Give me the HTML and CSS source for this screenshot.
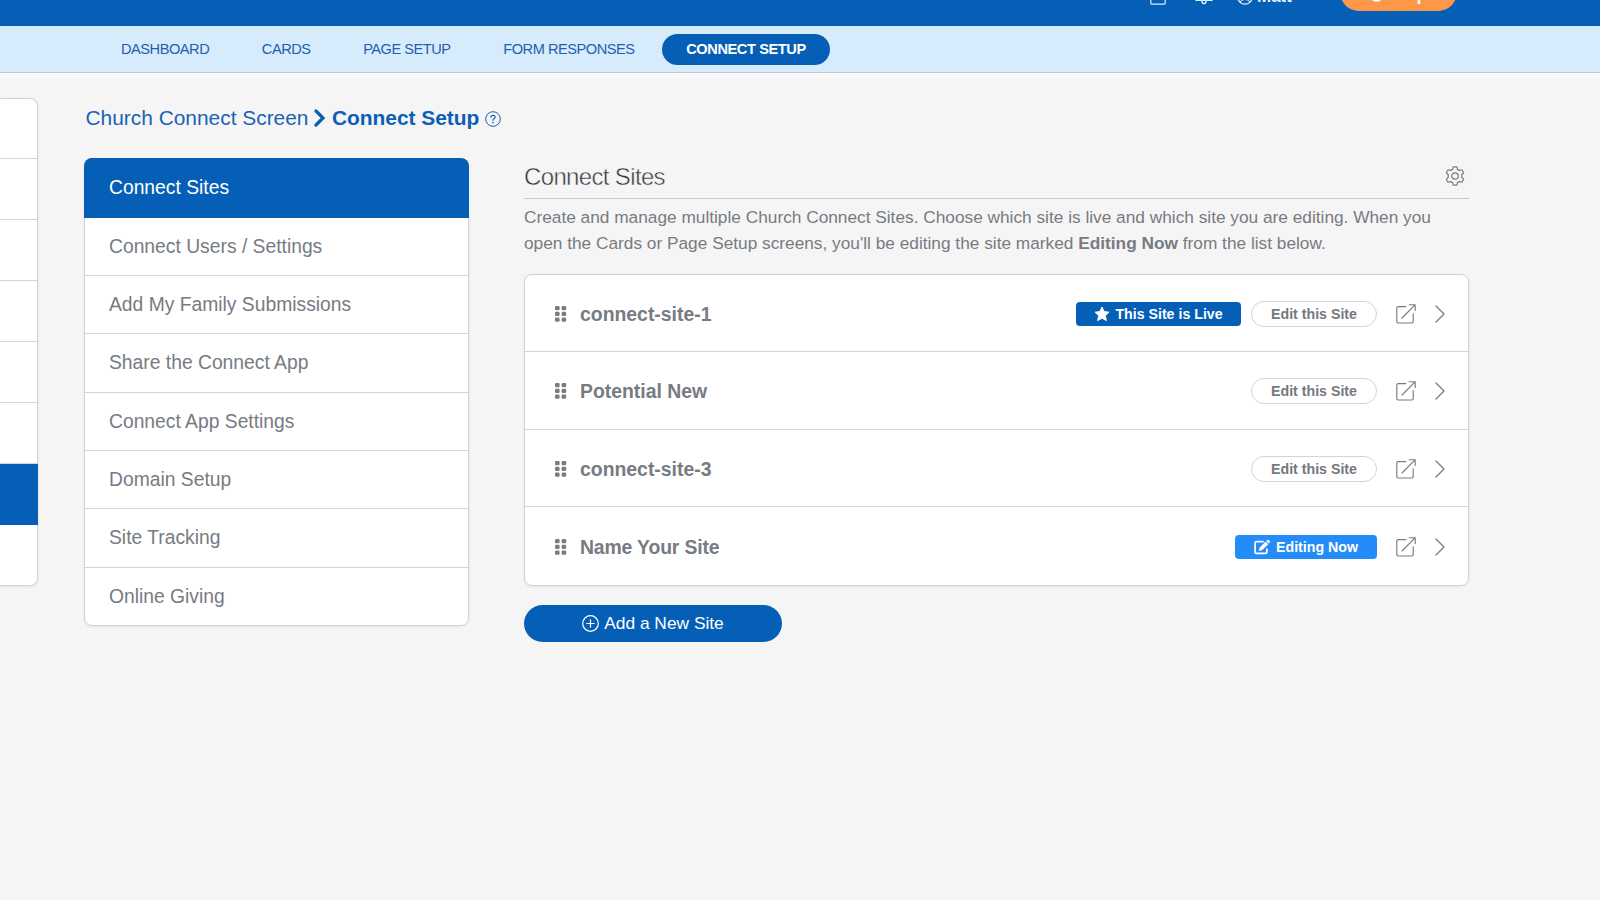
FILE: index.html
```html
<!DOCTYPE html>
<html lang="en">
<head>
<meta charset="utf-8">
<title>Connect Setup</title>
<link rel="stylesheet" href="styles.css">
</head>
<body>
<svg class="defs" width="0" height="0">
  <symbol id="grip" viewBox="0 0 12 16"><g fill="currentColor"><rect x="0" y="0" width="4.6" height="4.2" rx="1.3"/><rect x="6.6" y="0" width="4.6" height="4.2" rx="1.3"/><rect x="0" y="5.8" width="4.6" height="4.2" rx="1.3"/><rect x="6.6" y="5.8" width="4.6" height="4.2" rx="1.3"/><rect x="0" y="11.6" width="4.6" height="4.2" rx="1.3"/><rect x="6.6" y="11.6" width="4.6" height="4.2" rx="1.3"/></g></symbol>
  <symbol id="open" viewBox="0 0 20 20"><path fill="none" stroke="currentColor" stroke-width="1.15" stroke-linecap="round" stroke-linejoin="round" d="M9.8 2.6H2.2Q.8 2.6.8 4V17.6Q.8 19 2.2 19H15.8Q17.2 19 17.2 17.6V9.8M13.2.7H19.2V6.6M19 .9L6 14"/></symbol>
  <symbol id="next" viewBox="0 0 10 18"><path fill="none" stroke="currentColor" stroke-width="1.3" stroke-linecap="round" stroke-linejoin="round" d="M1 1L9 9L1 17"/></symbol>
</svg>

<header class="topbar">
  <div class="top-inner">
    <svg class="top-page" width="16" height="18" viewBox="0 0 16 18"><rect x=".8" y=".8" width="14.4" height="16.4" rx="1" fill="none" stroke="currentColor" stroke-width="1.2"/></svg>
    <svg class="top-bell" width="18" height="20" viewBox="0 0 18 20"><path d="M9 1C5 1 3.5 4 3.5 8S2 13 1 14.5V15.4H17V14.5C16 13 14.5 12 14.5 8S13 1 9 1ZM6.8 15.6Q7 18.6 9 18.6T11.2 15.6" fill="none" stroke="currentColor" stroke-width="1.4"/></svg>
    <span class="user"><svg width="16" height="16" viewBox="0 0 16 16"><circle cx="8" cy="8" r="7.2" fill="none" stroke="currentColor" stroke-width="1.3"/><path d="M3 12.8Q8 8 13 12.8" fill="none" stroke="currentColor"/></svg>Matt</span>
    <span class="help"><svg width="15" height="15" viewBox="0 0 15 15"><circle cx="7.5" cy="7.5" r="6" fill="none" stroke="currentColor" stroke-width="2.6"/></svg>Help</span>
  </div>
</header>

<nav class="subnav">
  <a>DASHBOARD</a><a>CARDS</a><a>PAGE SETUP</a><a>FORM RESPONSES</a><a class="current">CONNECT SETUP</a>
</nav>

<div class="page">
  <aside class="rail">
    <i></i><i></i><i></i><i></i><i></i><i></i><i class="on"></i><i></i>
  </aside>

  <main class="content">
    <h1 class="crumbs">
      <span>Church Connect Screen</span>
      <svg class="crumb-sep" width="12" height="18" viewBox="0 0 12 18"><path d="M2 2L9 9L2 16" fill="none" stroke="currentColor" stroke-width="3.2" stroke-linecap="round"/></svg>
      <b>Connect Setup</b>
      <svg class="crumb-help" width="16" height="16" viewBox="0 0 16 16"><circle cx="8" cy="8" r="7.3" fill="none" stroke="currentColor"/><path d="M5.8 6.2Q5.9 4.3 8 4.3T10.2 6.1Q10.2 7.1 9 7.7T8 9.3" fill="none" stroke="currentColor" stroke-width="1.2" stroke-linecap="round"/><circle cx="8" cy="11.5" r=".85" fill="currentColor"/></svg>
    </h1>

    <div class="columns">
      <ul class="menu">
        <li class="active">Connect Sites</li>
        <li>Connect Users / Settings</li>
        <li>Add My Family Submissions</li>
        <li>Share the Connect App</li>
        <li>Connect App Settings</li>
        <li>Domain Setup</li>
        <li>Site Tracking</li>
        <li>Online Giving</li>
      </ul>

      <section class="panel">
        <div class="panel-head">
          <h2>Connect Sites</h2>
          <svg class="gear" width="20" height="20" viewBox="0 0 20 20"><path d="M7.6 3.4L8 1.3Q8.1.8 8.6.8H11.4Q11.9.8 12 1.3L12.4 3.4Q13.5 3.8 14.3 4.5L16.3 3.8Q16.8 3.6 17.1 4.1L18.5 6.5Q18.7 7 18.3 7.3L16.7 8.7Q16.9 10 16.7 11.3L18.3 12.7Q18.7 13 18.5 13.5L17.1 15.9Q16.8 16.4 16.3 16.2L14.3 15.5Q13.5 16.2 12.4 16.6L12 18.7Q11.9 19.2 11.4 19.2H8.6Q8.1 19.2 8 18.7L7.6 16.6Q6.5 16.2 5.7 15.5L3.7 16.2Q3.2 16.4 2.9 15.9L1.5 13.5Q1.3 13 1.7 12.7L3.3 11.3Q3.1 10 3.3 8.7L1.7 7.3Q1.3 7 1.5 6.5L2.9 4.1Q3.2 3.6 3.7 3.8L5.7 4.5Q6.5 3.8 7.6 3.4Z" fill="none" stroke="currentColor" stroke-width="1.2"/><circle cx="10" cy="10" r="3.2" fill="none" stroke="currentColor" stroke-width="1.2"/></svg>
        </div>
        <p class="intro">Create and manage multiple Church Connect Sites. Choose which site is live and which site you are editing. When you<br>open the Cards or Page Setup screens, you'll be editing the site marked <b>Editing Now</b> from the list below.</p>

        <ul class="sites">
          <li>
            <svg class="grip"><use href="#grip"/></svg><span class="name">connect-site-1</span>
            <span class="badge live"><svg width="16" height="16" viewBox="0 0 16 16"><path d="M8 1L10.1 5.6L15 6.2L11.4 9.6L12.3 14.6L8 12.2L3.7 14.6L4.6 9.6L1 6.2L5.9 5.6Z" fill="currentColor" stroke="currentColor" stroke-linejoin="round"/></svg>This Site is Live</span>
            <button class="edit">Edit this Site</button>
            <svg class="open"><use href="#open"/></svg><svg class="next"><use href="#next"/></svg>
          </li>
          <li>
            <svg class="grip"><use href="#grip"/></svg><span class="name">Potential New</span>
            <button class="edit">Edit this Site</button>
            <svg class="open"><use href="#open"/></svg><svg class="next"><use href="#next"/></svg>
          </li>
          <li>
            <svg class="grip"><use href="#grip"/></svg><span class="name">connect-site-3</span>
            <button class="edit">Edit this Site</button>
            <svg class="open"><use href="#open"/></svg><svg class="next"><use href="#next"/></svg>
          </li>
          <li>
            <svg class="grip"><use href="#grip"/></svg><span class="name tight">Name Your Site</span>
            <span class="badge editing"><svg width="17" height="16" viewBox="0 0 17 16"><path d="M9 2.6H2.5Q1.1 2.6 1.1 4V13Q1.1 14.4 2.5 14.4H11.5Q12.9 14.4 12.9 13V10" fill="none" stroke="currentColor" stroke-width="1.7" stroke-linecap="round"/><path d="M11.6 2.6L14.2 5.2L8 11.3L4.9 12L5.5 8.7ZM12.3 1.9L13.2 1Q14 .4 14.7 1L15.8 2.1Q16.4 2.8 15.8 3.6L14.9 4.5Z" fill="currentColor"/></svg>Editing Now</span>
            <svg class="open"><use href="#open"/></svg><svg class="next"><use href="#next"/></svg>
          </li>
        </ul>

        <button class="add"><svg width="17" height="17" viewBox="0 0 17 17"><path d="M8.5 4.8V12.2M4.8 8.5H12.2" stroke="currentColor" stroke-width="1.2" stroke-linecap="round"/><circle cx="8.5" cy="8.5" r="7.8" fill="none" stroke="currentColor" stroke-width="1.2"/></svg>Add a New Site</button>
      </section>
    </div>
  </main>
</div>
</body>
</html>
```

FILE: styles.css
```css
* { box-sizing: border-box; }
body {
  margin: 0;
  height: 900px;
  overflow: hidden;
  background: #f5f5f5;
  color: #777b82;
  font-family: "Liberation Sans", Arial, sans-serif;
}
h1, h2, p, ul { margin: 0; padding: 0; font-weight: 400; }
ul { list-style: none; }
button { font-family: inherit; padding: 0; }
svg { flex: none; display: block; }
.defs { position: absolute; }

/* The header is scrolled so that only its lower edge remains in view. */
.topbar { height: 25.5px; overflow: hidden; background: #065fb7; color: #d9ecff; }
.top-inner { display: flex; align-items: flex-end; height: 40px; margin-top: -29px; padding-left: 1150px; }
.top-page { margin-bottom: 6.5px; }
.top-bell { margin: 0 0 6px 28.5px; }
.user { display: flex; align-items: center; gap: 4px; margin: 0 0 5px 24.5px; color: #e6f2ff; font-size: 17px; font-weight: 700; line-height: 18px; }
.user svg { margin-bottom: 1px; }
.help {
  display: flex; align-items: center; justify-content: center; gap: 4px;
  width: 117px; height: 38px; margin: 0 0 0 48px; padding-top: 5px; border-radius: 19px;
  background: #ff9748; color: #fff; font-size: 18px; font-weight: 700;
}

.subnav {
  display: flex; align-items: center; height: 47.5px; padding: 1px 0 0 121px;
  background: #d6ebfc; border-bottom: 1.5px solid #b7cbdf; color: #1f5fac;
  font-size: 14.6px; letter-spacing: -.47px; white-space: nowrap;
  box-shadow: 0 5px 0 #f8f8f8;
}
.subnav a { margin-right: 52.6px; }
.subnav a:nth-child(4) { margin-right: 27.5px; }
.subnav .current {
  width: 168px; margin: 0; border-radius: 16px; background: #065fb7; color: #fff;
  font-weight: 700; line-height: 31px; text-align: center; letter-spacing: -.4px;
}

.page { display: flex; align-items: flex-start; }
.rail {
  width: 38px; margin-top: 25px; border: solid #d4d4d4; border-width: 1px 1px 1px 0;
  border-radius: 0 8px 8px 0; background: #fff; box-shadow: 0 1px 3px #0001;
}
.rail i { display: block; height: 60.9px; border-bottom: 1px solid #d4d4d4; }
.rail i:first-child { height: 60.2px; }
.rail i:last-child { height: 60px; border: 0; }
.rail .on { margin-right: -1px; background: #065fb7; border-color: #065fb7; }

.content { padding: 32px 0 0 46px; }
.crumbs { display: flex; align-items: center; height: 26px; padding-left: 1.5px; color: #1a62b4; font-size: 20.9px; line-height: 26px; white-space: nowrap; }
.crumbs b { color: #0b5fb5; }
.crumb-sep { margin: 0 5.5px 0 6px; color: #0b5fb5; }
.crumb-help { margin: 2px 0 0 6px; }

.columns { display: flex; align-items: flex-start; gap: 55px; margin-top: 26.5px; }
.menu {
  width: 385px; border: 1px solid #d2d3d5; border-radius: 8px; background: #fff;
  font-size: 19.3px; box-shadow: 0 1px 3px #0001;
}
.menu li { height: 58.4px; padding-left: 24px; border-bottom: 1px solid #d2d3d5; line-height: 58.5px; }
.menu li:last-child { border: 0; height: 57.5px; }
.menu .active { height: 60px; margin: -1px -1px 0; padding-left: 25px; border: 0; border-radius: 8px 8px 0 0; background: #065fb7; color: #fff; line-height: 60px; }

.panel { width: 945px; }
.panel-head { display: flex; align-items: center; justify-content: space-between; height: 41.5px; padding-right: 4px; border-bottom: 1px solid #c8c9cb; }
.panel-head h2 { margin-top: -1px; color: #333; font-size: 24px; letter-spacing: -.65px; -webkit-text-stroke: .5px #f5f5f5; }
.gear { margin-top: -3px; }
.intro { padding-top: 6px; font-size: 17.28px; line-height: 25.7px; white-space: nowrap; }
.sites { margin-top: 17.5px; border: 1px solid #d2d3d5; border-radius: 8px; background: #fff; box-shadow: 0 1px 3px #0001; }
.sites li { display: flex; align-items: center; height: 77.5px; padding: 1px 23.5px 0 30px; border-bottom: 1px solid #d2d3d5; }
.sites li:last-child { border: 0; }
.grip { width: 12px; height: 16px; margin-right: 13px; }
.name { flex: 1; padding-top: 1px; font-size: 19.4px; font-weight: 700; }
.tight { letter-spacing: -.15px; }
.badge {
  display: flex; align-items: center; justify-content: center; gap: 5px; height: 24px;
  border-radius: 4px; color: #fff; font-size: 14.2px; font-weight: 700;
}
.live { width: 165px; margin-right: 10px; background: #065fb7; }
.editing { width: 142px; background: #238cf8; }
.edit {
  width: 126px; height: 26px; border: 1px solid #d2d3d5; border-radius: 13px; background: #fff;
  color: #74787f; font-size: 14.2px; font-weight: 700;
}
.open { width: 20px; height: 20px; margin-left: 18.5px; }
.next { width: 10px; height: 18px; margin-left: 19px; }
.add {
  display: flex; align-items: center; justify-content: center; gap: 5px; width: 258px; height: 37.5px;
  margin-top: 19px; border: 0; border-radius: 19px; background: #065fb7; color: #fff; font-size: 17.35px;
}
```
